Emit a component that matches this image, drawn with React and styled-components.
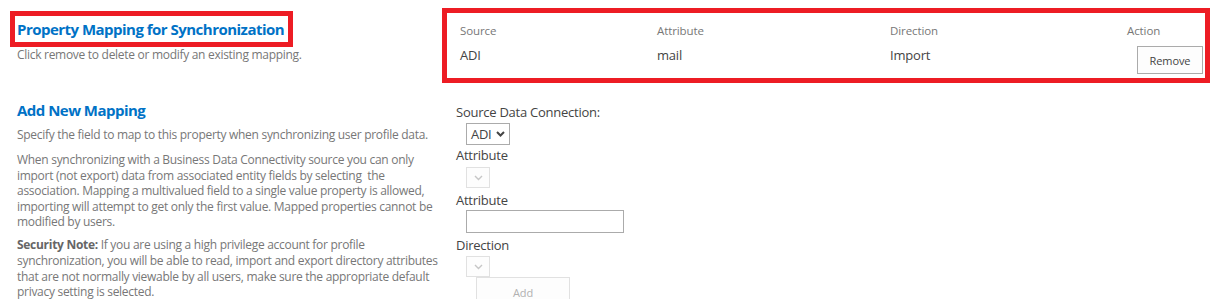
import React from "react";
import styled, { createGlobalStyle } from "styled-components";

const GlobalStyle = createGlobalStyle`
  html, body { margin: 0; padding: 0; background: #fff; }
  body { font-family: "Open Sans", "Segoe UI", sans-serif; color: #444; }
  * { box-sizing: border-box; }
`;

const RED = "#ed1c24";

const Page = styled.div`
  width: 1215px;
  height: 299px;
  overflow: hidden;
  background: #fff;
`;

const Row = styled.div`
  display: flex;
  align-items: flex-start;
  margin-top: ${(p) => p.$top || 0}px;
`;

const LeftCol = styled.div`
  width: 442px;
  flex: none;
  padding-left: ${(p) => p.$pad || 0}px;
`;

const RightCol = styled.div`
  flex: 1;
  padding-right: 5px;
  padding-left: ${(p) => p.$pad || 0}px;
  padding-top: ${(p) => p.$padTop || 0}px;
`;

const TitleBox = styled.div`
  display: inline-block;
  margin-top: 11px;
  width: 283px;
  height: 36px;
  border: 5px solid ${RED};
  padding-left: 2px;
`;

const SectionTitle = styled.h2`
  margin: 0;
  font-size: 15px;
  font-weight: 700;
  color: #0072c6;
  line-height: ${(p) => p.$lh || 26}px;
  white-space: nowrap;
  letter-spacing: -0.52px;
`;

const Description = styled.p`
  margin: ${(p) => p.$mt || 0}px 0 0 ${(p) => p.$ml || 0}px;
  font-size: 12px;
  line-height: ${(p) => p.$lh || 16}px;
  color: #777;
  white-space: nowrap;
  letter-spacing: -0.29px;
  b { font-weight: 700; color: #666; }
`;

const TableBox = styled.div`
  margin-top: 8px;
  height: 75px;
  border: 5px solid ${RED};
  padding: 10px 0 0 13px;
  display: grid;
  grid-template-columns: 197px 233px 237px 1fr;
  grid-template-rows: 16px auto;
  row-gap: 6px;
`;

const HeadCell = styled.div`
  font-size: 11.5px;
  line-height: 16px;
  color: #777;
  letter-spacing: -0.1px;
`;

const DataCell = styled.div`
  font-size: 13px;
  line-height: 18px;
  padding-top: 1px;
  color: #444;
  letter-spacing: -0.2px;
`;

const ActionButton = styled.button`
  display: block;
  margin: ${(p) => p.$mt || 0}px 0 0 ${(p) => p.$ml || 10}px;
  width: ${(p) => p.$w}px;
  height: ${(p) => p.$h}px;
  padding: 0;
  font-family: inherit;
  font-size: 11px;
  letter-spacing: -0.1px;
  color: ${(p) => (p.disabled ? "#b1b1b1" : "#444")};
  background: #fdfdfd;
  border: 1px solid ${(p) => (p.disabled ? "#e1e1e1" : "#ababab")};
  border-radius: 0;
`;

const FieldLabel = styled.div`
  margin-top: ${(p) => p.$mt || 0}px;
  font-size: 13px;
  line-height: 16px;
  color: #444;
  letter-spacing: -0.25px;
`;

const FakeSelect = styled.div`
  margin: ${(p) => p.$mt || 0}px 0 0 10px;
  width: ${(p) => p.$w}px;
  height: ${(p) => p.$h}px;
  display: flex;
  align-items: center;
  justify-content: ${(p) => (p.$disabled ? "center" : "space-between")};
  padding: ${(p) => (p.$disabled ? "0" : "0 4px 0 4px")};
  border: 1px solid ${(p) => (p.$disabled ? "#e1e1e1" : "#ababab")};
  background: ${(p) => (p.$disabled ? "#fdfdfd" : "#fff")};
  font-size: 13px;
  color: #444;
  letter-spacing: -0.3px;
`;

const TextInput = styled.input`
  display: block;
  margin: ${(p) => p.$mt || 0}px 0 0 10px;
  width: 158px;
  height: 23px;
  border: 1px solid #ababab;
  background: #fff;
  padding: 0 4px;
  font-family: inherit;
  font-size: 13px;
  outline: none;
`;

const Chevron = ({ color, weight }) => (
  <svg width="9" height="6" viewBox="0 0 9 6" aria-hidden="true">
    <path d="M1 1 L4.5 4.5 L8 1" fill="none" stroke={color} strokeWidth={weight} />
  </svg>
);

export default function App() {
  return (
    <Page>
      <GlobalStyle />
      <Row>
        <LeftCol $pad={10}>
          <TitleBox>
            <SectionTitle>Property Mapping for Synchronization</SectionTitle>
          </TitleBox>
          <Description $ml={7}>Click remove to delete or modify an existing mapping.</Description>
        </LeftCol>
        <RightCol>
          <TableBox>
            <HeadCell>Source</HeadCell>
            <HeadCell>Attribute</HeadCell>
            <HeadCell>Direction</HeadCell>
            <HeadCell>Action</HeadCell>
            <DataCell>ADI</DataCell>
            <DataCell>mail</DataCell>
            <DataCell>Import</DataCell>
            <div>
              <ActionButton $w={66} $h={28} $mt={1}>Remove</ActionButton>
            </div>
          </TableBox>
        </RightCol>
      </Row>
      <Row $top={17}>
        <LeftCol $pad={17}>
          <SectionTitle $lh={21}>Add New Mapping</SectionTitle>
          <Description $mt={6}>
            Specify the field to map to this property when synchronizing user profile data.
          </Description>
          <Description $mt={9} $lh={15.6}>
            When synchronizing with a Business Data Connectivity source you can only
            <br />
            import (not export) data from associated entity fields by selecting&nbsp; the
            <br />
            association. Mapping a multivalued field to a single value property is allowed,
            <br />
            importing will attempt to get only the first value. Mapped properties cannot be
            <br />
            modified by users.
          </Description>
          <Description $mt={7.5} $lh={15.6}>
            <b>Security Note:</b> If you are using a high privilege account for profile
            <br />
            synchronization, you will be able to read, import and export directory attributes
            <br />
            that are not normally viewable by all users, make sure the appropriate default
            <br />
            privacy setting is selected.
          </Description>
        </LeftCol>
        <RightCol $pad={14} $padTop={4}>
          <FieldLabel>Source Data Connection:</FieldLabel>
          <FakeSelect $mt={3} $w={44} $h={22}>
            <span>ADI</span>
            <Chevron color="#444" weight={2} />
          </FakeSelect>
          <FieldLabel $mt={2}>Attribute</FieldLabel>
          <FakeSelect $mt={4} $w={24} $h={21} $disabled>
            <Chevron color="#c6c6c6" weight={1.4} />
          </FakeSelect>
          <FieldLabel $mt={4}>Attribute</FieldLabel>
          <TextInput $mt={2} type="text" />
          <FieldLabel $mt={4}>Direction</FieldLabel>
          <FakeSelect $mt={3} $w={24} $h={21} $disabled>
            <Chevron color="#c6c6c6" weight={1.4} />
          </FakeSelect>
          <ActionButton $w={94} $h={30} $ml={20} disabled>Add</ActionButton>
        </RightCol>
      </Row>
    </Page>
  );
}
